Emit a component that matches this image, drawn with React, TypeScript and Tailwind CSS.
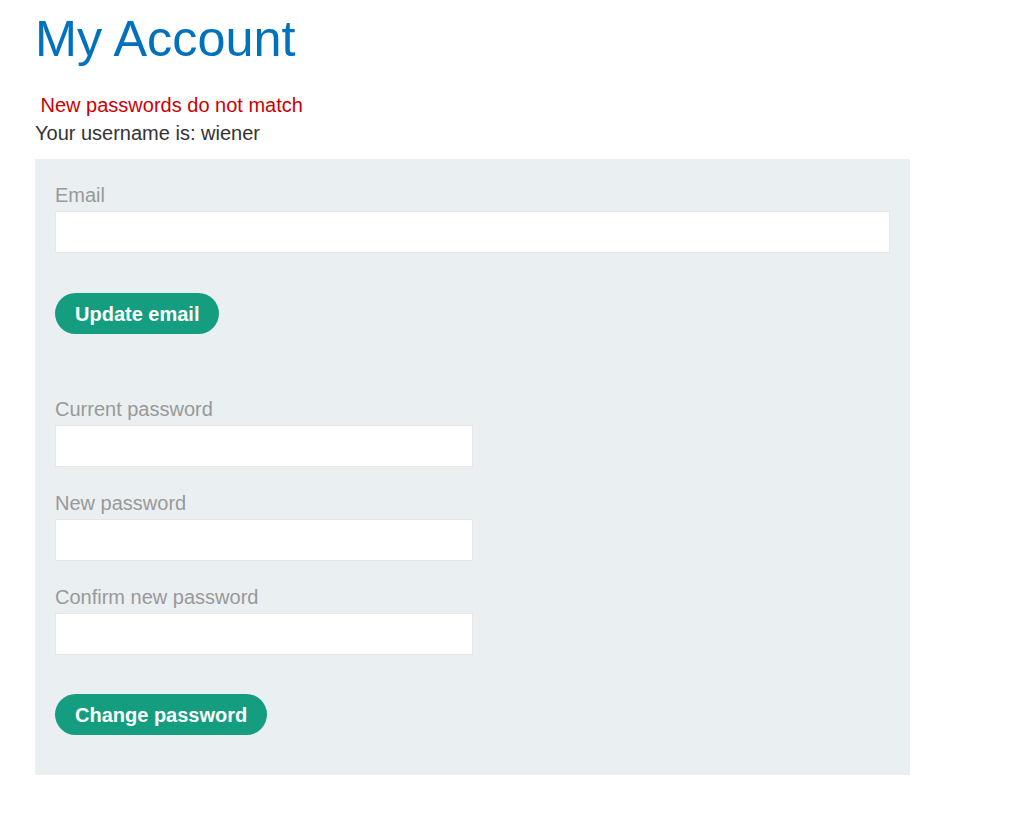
import React, { useState } from "react";

const Field = ({
  label,
  value,
  onChange,
  type = "text",
  half = false,
  first = false,
}: {
  label: string;
  value: string;
  onChange: (v: string) => void;
  type?: string;
  half?: boolean;
  first?: boolean;
}) => (
  <div className={first ? "" : "mt-5"}>
    <label className="block text-[20px] leading-[32px] text-[#999999]">{label}</label>
    <input
      type={type}
      value={value}
      onChange={(e) => onChange(e.target.value)}
      className={`${half ? "w-1/2" : "w-full"} block h-[42px] bg-white border border-[#e6e6e6] px-2 text-[20px] text-[#333332] outline-none`}
    />
  </div>
);

const App: React.FC = () => {
  const [email, setEmail] = useState("");
  const [current, setCurrent] = useState("");
  const [next, setNext] = useState("");
  const [confirm, setConfirm] = useState("");

  return (
    <div
      className="min-h-[815px] bg-white pl-[35px] pr-[106px] pt-[9px]"
      style={{ fontFamily: '"Liberation Sans", Arial, sans-serif' }}
    >
      <h1 className="text-[50.4px] leading-[60px] text-[#0071bc]">My Account</h1>

      <div className="mt-[22px] text-[20px] leading-[28px]">
        <p className="text-[#cc0000]">&nbsp;New passwords do not match</p>
        <p className="text-[#333332]">Your username is: wiener</p>
      </div>

      <div className="mt-[12px] w-[875px] bg-[#eaeff2] p-5 pb-10">
        <form onSubmit={(e) => e.preventDefault()}>
          <Field label="Email" value={email} onChange={setEmail} type="email" first />
          <button
            type="submit"
            className="mt-10 h-[41px] rounded-full bg-[#159d80] px-5 text-[20px] font-bold text-white"
          >
            Update email
          </button>
        </form>

        <form onSubmit={(e) => e.preventDefault()} className="mt-[59px]">
          <Field label="Current password" value={current} onChange={setCurrent} type="password" half first />
          <Field label="New password" value={next} onChange={setNext} type="password" half />
          <Field label="Confirm new password" value={confirm} onChange={setConfirm} type="password" half />
          <button
            type="submit"
            className="mt-[39px] h-[41px] rounded-full bg-[#159d80] px-5 text-[20px] font-bold text-white"
          >
            Change password
          </button>
        </form>
      </div>
    </div>
  );
};

export default App;
